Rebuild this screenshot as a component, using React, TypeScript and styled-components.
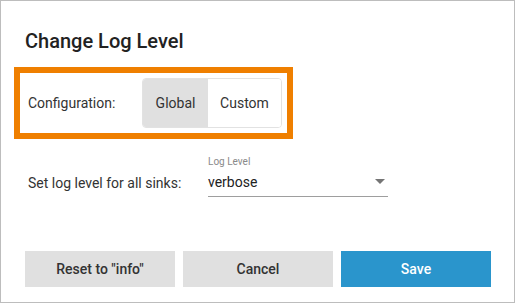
import { useState } from 'react';
import styled, { createGlobalStyle } from 'styled-components';

const GlobalStyle = createGlobalStyle`
	html, body {
		margin: 0;
		padding: 0;
		background: #ffffff;
	}
	body {
		font-family: Roboto, 'Liberation Sans', Arial, sans-serif;
		color: #333333;
	}
	* {
		box-sizing: border-box;
	}
`;

const Dialog = styled.div`
	width: 515px;
	height: 303px;
	border: 1px solid #bdbdbd;
	padding: 28px 23px 15px 24px;
	display: flex;
	flex-direction: column;
	background: #ffffff;
`;

const Title = styled.h2`
	margin: 0;
	font-size: 20px;
	line-height: 24px;
	font-weight: 500;
	color: #222222;
`;

const Highlight = styled.div`
	width: 279px;
	height: 72px;
	margin: 14px 0 0 -11px;
	border: 6px solid #ef7f00;
	padding: 0 5px 0 8px;
	display: flex;
	align-items: center;
	justify-content: space-between;
`;

const Label = styled.span`
	font-size: 14px;
	line-height: 20px;
	color: #333333;
`;

const Toggle = styled.div`
	display: flex;
	height: 50px;
	border: 1px solid #e2e2e2;
	border-radius: 4px;
	overflow: hidden;
`;

const ToggleOption = styled.button<{ $active: boolean; $width: number }>`
	width: ${(p) => p.$width}px;
	height: 100%;
	border: none;
	margin: 0;
	padding: 0;
	font-family: inherit;
	font-size: 14px;
	color: #333333;
	background: ${(p) => (p.$active ? '#e0e0e0' : '#ffffff')};
	cursor: pointer;
`;

const FieldRow = styled.div`
	display: flex;
	align-items: flex-end;
	margin: 17px 0 0 3px;
`;

const RowLabel = styled(Label)`
	width: 180px;
	margin-bottom: 4px;
`;

const Select = styled.div`
	width: 180px;
	display: flex;
	flex-direction: column;
	gap: 4px;
`;

const SelectCaption = styled.span`
	font-size: 10px;
	line-height: 12px;
	color: #8a8a8a;
`;

const SelectValue = styled.div`
	display: flex;
	align-items: center;
	justify-content: space-between;
	height: 25px;
	padding-bottom: 5px;
	border-bottom: 1px solid #9e9e9e;
	font-size: 14px;
	line-height: 20px;
	color: #222222;
`;

const Caret = styled.span`
	width: 0;
	height: 0;
	margin-right: 3px;
	border-left: 5px solid transparent;
	border-right: 5px solid transparent;
	border-top: 5px solid #757575;
`;

const Actions = styled.div`
	display: flex;
	gap: 8px;
	margin-top: auto;
`;

const Button = styled.button<{ $primary?: boolean }>`
	width: 150px;
	height: 36px;
	border: none;
	padding: 0;
	font-family: inherit;
	font-size: 14px;
	font-weight: 500;
	color: ${(p) => (p.$primary ? '#ffffff' : '#333333')};
	background: ${(p) => (p.$primary ? '#2a95cc' : '#e0e0e0')};
	cursor: pointer;
`;

const App = () => {
	const [mode, setMode] = useState<'global' | 'custom'>('global');

	return (
		<>
			<GlobalStyle />
			<Dialog>
				<Title>Change Log Level</Title>
				<Highlight>
					<Label>Configuration:</Label>
					<Toggle>
						<ToggleOption
							$width={65}
							$active={mode === 'global'}
							onClick={() => setMode('global')}
						>
							Global
						</ToggleOption>
						<ToggleOption
							$width={73}
							$active={mode === 'custom'}
							onClick={() => setMode('custom')}
						>
							Custom
						</ToggleOption>
					</Toggle>
				</Highlight>
				<FieldRow>
					<RowLabel>Set log level for all sinks:</RowLabel>
					<Select>
						<SelectCaption>Log Level</SelectCaption>
						<SelectValue>
							verbose
							<Caret />
						</SelectValue>
					</Select>
				</FieldRow>
				<Actions>
					<Button>Reset to "info"</Button>
					<Button>Cancel</Button>
					<Button $primary>Save</Button>
				</Actions>
			</Dialog>
		</>
	);
};

export default App;
